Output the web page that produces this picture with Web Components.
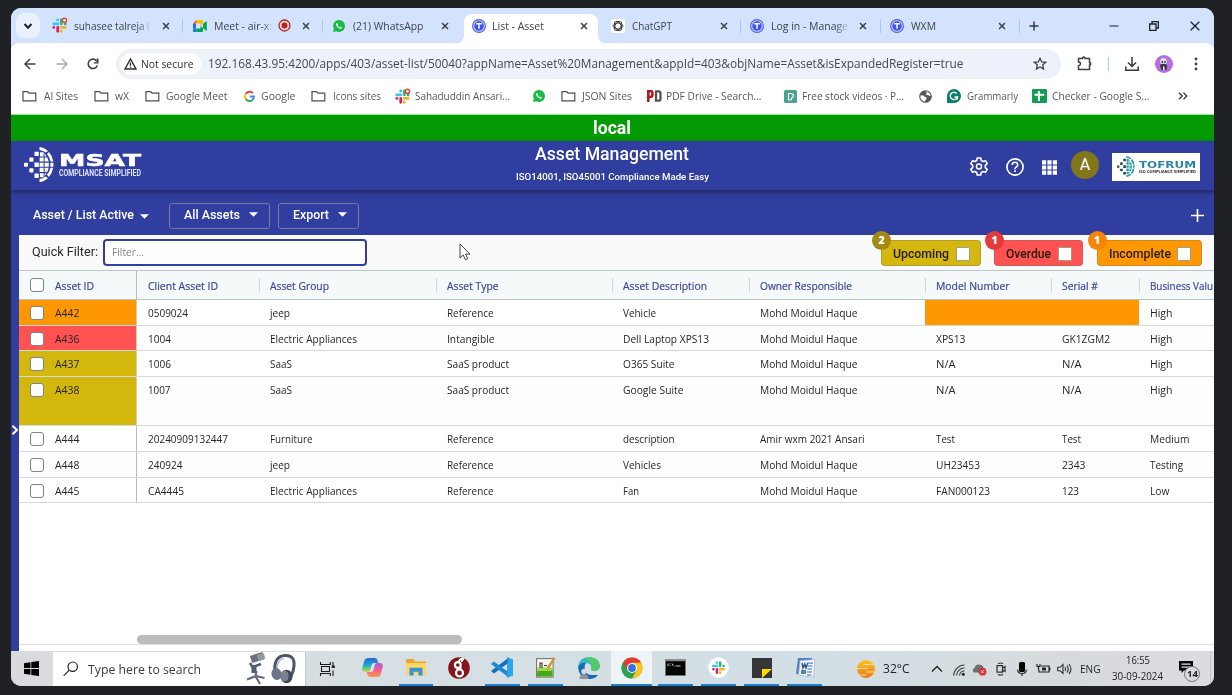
<!DOCTYPE html>
<html lang="en">
<head>
<meta charset="utf-8">
<title>List - Asset</title>
<style>
html,body{margin:0;height:100%;background:#202125;overflow:hidden}
body{display:flex;padding:8px 18px 9px 11px;box-sizing:border-box;font-family:"Open Sans","Noto Sans",sans-serif}
</style>
</head>
<body>
<desktop-window></desktop-window>
<script>
const svg=(w,h,vb,body)=>`<svg width="${w}" height="${h}" viewBox="${vb}" fill="none" style="display:block;overflow:visible">${body}</svg>`;
const slackMark='<g stroke-width="3" stroke-linecap="round"><path stroke="#36c5f0" d="M1.800 6.200h4.300M6.100 2v.1"/><path stroke="#2eb67d" d="M9.900 2v4.200M14 6.200v.1"/><path stroke="#e01e5a" d="M6.100 10v4.200M1.900 10h.1"/><path stroke="#ecb22e" d="M9.900 10h4.300M9.900 14v.1"/></g>';
const globeSquares=(c1,c2)=>`<g fill="${c1}"><rect y="15.700" width="4" height="4" rx="1"/><rect x="5.300" y="10.600" width="4.200" height="4.200" rx=".8"/><rect x="5.300" y="21.200" width="4.200" height="4.200" rx=".8"/><path d="M10.500 4.700h4.300v4.200h-4.300zM10.500 15.600h4.300v4.300h-4.300zM10.500 26.600h4.300v4.300h-4.300z"/></g><g fill="${c2}"><path d="M15.500 0q5 .5 8.500 4l-2.500 1.500q-2-2-6-2.600zM16 5.200h3.600v4.300H16zM20.600 6l1.800 3.500h-1.800zM25 5q3.500 4 4.300 9.500H26.800Q25.500 10 23 7zM15.600 10.600h4v4h-4zM20.600 10.600h2.600l1.700 4h-4.300zM15.600 15.700h4v4h-4zM20.600 15.700h4.200v4h-4.200zM26.300 15.700h3.200q0 2.200-.2 4h-3zM15.600 20.800h4v4.300h-4zM20.600 20.800h4.200l-1.600 4.300h-2.600zM26.600 20.800h2.600q-1 5.500-4.300 9.300l-2-2.500Q25.500 25 26.600 20.800zM16 26.200h3.600v4H16zM20.600 26.200h1.800l-1.800 3.300zM15.500 32q3.500-.6 6-2.600l2.500 1.500q-3.500 3.600-8.500 4.100z"/></g>`;
const ICONS={
 down:svg(10,8,'0 0 10 8','<path d="M1.500 2l3.500 3.700L8.500 2" stroke="#202124" stroke-width="2"/>'),
 slack:svg(15,15,'0 0 16 16',slackMark+'<circle cx="13.300" cy="2.500" r="2.300" fill="#fff" stroke="#e0433a" stroke-width="1.500"/>'),
 meet:svg(14,12,'0 0 14 12','<path fill="#1a73e8" d="M0 3.500h3v5H0z"/><path fill="#ea4335" d="M0 3.500L3.500 0v3.500z"/><path fill="#fbbc04" d="M3.500 0H9q1 0 1 1v3L7.500 6V3.500h-4z"/><path fill="#1a73e8" d="M0 8.500h3.500V12H1q-1 0-1-1z"/><path fill="#00a94b" d="M3.500 12H9q1 0 1-1V8L7.500 6v2.500h-4zM10 4l3-2.700q.8-.3.800.5v8.400q0 .8-.8.500L10 8z"/>'),
 rec:svg(13,13,'0 0 13 13','<circle cx="6.500" cy="6.500" r="5.500" stroke="#b3261e" stroke-width="1.300" fill="#e8d5de"/><circle cx="6.500" cy="6.500" r="3" fill="#b3261e"/>'),
 x:svg(8,8,'0 0 8 8','<path d="M1 1l6 6M7 1L1 7" stroke="#3c4043" stroke-width="1.500"/>'),
 wa:svg(12,12,'0 0 12 12','<path fill="#16bd42" d="M0 12l.8-3.200A6 6 0 1 1 3.200 11.200z"/><path d="M3.500 3.200q.7-.6 1.100.2l.5 1-.5.900q.7 1.300 2 1.900l.8-.6 1.300.6q.4 1.200-1 1.600Q5.500 9 3.500 6 2.700 4 3.500 3.200z" fill="#fff"/>'),
 tee:svg(14,14,'0 0 14 14','<circle cx="7" cy="7" r="6.400" fill="#c3ccff" stroke="#5060ef" stroke-width="1.100"/><circle cx="7" cy="7" r="4.700" fill="#4054ec"/><path d="M4.200 4.800h5.600M7 4.800v5" stroke="#fff" stroke-width="1.500"/>'),
 gpt:svg(14,14,'0 0 14 14','<rect width="14" height="14" rx="2.500" fill="#fff"/><g stroke="#3a3a3a" stroke-width=".9"><ellipse cx="7" cy="7" rx="5" ry="3"/><ellipse cx="7" cy="7" rx="5" ry="3" transform="rotate(60 7 7)"/><ellipse cx="7" cy="7" rx="5" ry="3" transform="rotate(120 7 7)"/></g>'),
 plus:svg(10,10,'0 0 10 10','<path d="M5 .5v9M.5 5h9" stroke="#33363a" stroke-width="1.500"/>'),
 min:svg(10,10,'0 0 10 10','<path d="M.5 5h9" stroke="#202124" stroke-width="1.200"/>'),
 restore:svg(10,10,'0 0 10 10','<path d="M.7 3h6.300v6.300H.7zM3 3V.7h6.300V7H7" stroke="#202124" stroke-width="1.300"/>'),
 close:svg(10,10,'0 0 10 10','<path d="M.7.7l8.600 8.600M9.300.7L.7 9.300" stroke="#202124" stroke-width="1.300"/>'),
 back:svg(12,12,'0 0 12 12','<path d="M11.500 6H1.500M6 1L1 6l5 5" stroke="#43474b" stroke-width="1.500"/>'),
 fwd:svg(12,12,'0 0 12 12','<path d="M.5 6h10M6 1l5 5-5 5" stroke="#a5a7aa" stroke-width="1.300"/>'),
 reload:svg(12,12,'0 0 12 12','<path d="M10.300 7.500A4.700 4.700 0 1 1 9.800 3.200" stroke="#3c4043" stroke-width="1.600"/><path d="M11.500.5v5H6.800V4.200h3V.5z" fill="#3c4043"/>'),
 warn:svg(13,12,'0 0 13 12','<path d="M6.500 1L12 11H1z" stroke="#2c2e31" stroke-width="1.400"/><path d="M6.500 4.500v3.200M6.500 8.500v1.300" stroke="#2c2e31" stroke-width="1.300"/>'),
 star:svg(14,13,'0 0 14 13','<path d="M7 1.200l1.700 3.700 4 .4-3 2.700.9 4L7 10l-3.600 2 .9-4-3-2.700 4-.4z" stroke="#3c4043" stroke-width="1.300"/>'),
 ext:svg(16,15,'0 0 16 15','<path d="M1.500 2.500h4V1.700q1.200-1.200 2.500 0v.8h4.500v4.200h.8q1 1.200 0 2.400h-.8v4.400h-11V9.700q2-.2 2-1.900t-2-1.800z" stroke="#3c4043" stroke-width="1.500"/>'),
 dl:svg(14,14,'0 0 14 14','<path d="M7 0v9M3 5.500l4 4 4-4M.8 9.500v3.700h12.400V9.500" stroke="#33363a" stroke-width="1.500"/>'),
 av:svg(18,18,'0 0 18 18','<circle cx="9" cy="9" r="9" fill="#b56de0"/><circle cx="8.500" cy="6.500" r="3.400" fill="#ddd9e2"/><path d="M5.500 9.500q3-1.500 6 0l1 3h-1V15H6v-2.500H5z" fill="#38363d"/><circle cx="7.300" cy="7" r=".9" fill="#333"/><circle cx="10" cy="7" r=".9" fill="#333"/><path d="M8 11.500h1.500V15H8z" fill="#eee"/>'),
 dots:svg(4,14,'0 0 4 14','<g fill="#3c4043"><circle cx="2" cy="2" r="1.400"/><circle cx="2" cy="7" r="1.400"/><circle cx="2" cy="12" r="1.400"/></g>'),
 folder:svg(15,12,'0 0 15 12','<path d="M1 10V1.700h4.700L7 3.200h6.800v7.600H1z" stroke="#4b4e52" stroke-width="1.200"/>'),
 google:svg(11,11,'0 0 11 11','<path d="M9 2.200A4.400 4.400 0 0 0 1.800 3" stroke="#ea4335" stroke-width="2"/><path d="M1.700 3.200a4.400 4.400 0 0 0 0 4.700" stroke="#fbbc05" stroke-width="2"/><path d="M1.800 8A4.400 4.400 0 0 0 8.500 8.900" stroke="#34a853" stroke-width="2"/><path d="M5.700 5.600h4.200Q9.900 8 8.300 9.100" stroke="#4285f4" stroke-width="2"/>'),
 pd:svg(15,12,'0 0 15 12','<path d="M1.300 12V1.300h2.900q1.200 0 1.200 1.200v3q0 1.200-1.200 1.200H2" stroke="#b0151b" stroke-width="2.500"/><path d="M9 1.300h2.500q2 0 2 2v5.400q0 2-2 2H9z" stroke="#555" stroke-width="2.300"/>'),
 pexels:svg(13,13,'0 0 13 13','<rect width="13" height="13" rx="1.500" fill="#4ba491"/><path d="M4.500 3.500H7q2.300.2 2.300 2.300T7.500 8v1.700h-3z" stroke="#fff" stroke-width="1.100"/>'),
 globe:svg(13,13,'0 0 13 13','<circle cx="6.500" cy="6.500" r="6.300" fill="#55585c"/><path d="M1.500 5.500q2.500-.8 4 1.200l2 .5-.3 2-1.700 2.500Q2.500 11 1.500 8zM6.500 1.300L8 3 6.500 4.500l2.500.7 2.700.8Q11.500 3 8.500 1.700z" fill="#fff"/>'),
 gram:svg(14,14,'0 0 14 14','<path d="M0 14V7a7 7 0 1 1 7 7z" fill="#0c7f6a"/><path d="M9.800 4.500A3.700 3.700 0 1 0 10.500 8H7.500M10.500 8l-.5 2.500" stroke="#fff" stroke-width="1.400"/>'),
 sheet:svg(15,14,'0 0 15 14','<rect width="15" height="14" rx="1" fill="#129c52"/><path d="M6.900 2v10M2.500 5.700h9.800" stroke="#fff" stroke-width="2"/>'),
 more:svg(10,8,'0 0 10 8','<path d="M1 .7L4.300 4 1 7.300M5.500.7L8.800 4 5.500 7.300" stroke="#3c4043" stroke-width="1.400"/>'),
 msat:svg(30,35,'0 0 30 35',globeSquares('#fff','#fff')),
 tof:svg(18,23,'0 0 30 35',globeSquares('#27455a','#2b9ba5')),
 gear:svg(18,19,'0 0 18 19','<path d="M7.200 1h3.600l.5 2.500 1.700 1 2.400-.8 1.800 3-1.900 1.700v2.200l1.900 1.700-1.800 3-2.400-.8-1.700 1-.5 2.500H7.200l-.5-2.500-1.700-1-2.400.8-1.800-3 1.900-1.700V8.400L.8 6.700l1.800-3 2.400.8 1.700-1z" stroke="#fff" stroke-width="1.600" stroke-linejoin="round"/><circle cx="9" cy="9.500" r="2.500" stroke="#fff" stroke-width="1.500"/>'),
 help:svg(18,18,'0 0 18 18','<circle cx="9" cy="9" r="8.100" stroke="#fff" stroke-width="1.700"/><path d="M6.200 7q.1-2.700 2.800-2.700T11.800 7Q11.800 8.200 10 9.200 9 9.900 9 11.200" stroke="#fff" stroke-width="1.600"/><path d="M8.100 12.300h1.800V14H8.100z" fill="#fff"/>'),
 apps:svg(15,15,'0 0 15 15','<path fill="#fff" d="M0 .3h4.200v4.200H0zM5.400.3h4.200v4.200H5.400zM10.800.3H15v4.200h-4.200zM0 5.500h4.200v4.100H0zM5.400 5.500h4.200v4.100H5.400zM10.800 5.500H15v4.100h-4.200zM0 10.600h4.200v4.200H0zM5.400 10.600h4.200v4.200H5.400zM10.800 10.600H15v4.200h-4.200z"/>'),
 caret:svg(9,5,'0 0 9 5','<path fill="#fff" d="M0 .3h9L4.500 4.800z"/>'),
 add:svg(13,13,'0 0 13 13','<path d="M6.500 0v13M0 6.500h13" stroke="#fff" stroke-width="1.700"/>'),
 win:svg(15,15,'0 0 15 15','<path fill="#000" d="M0 2.200l6.500-1v5.900H0zM7.300 1.100L15 0v7.100H7.300zM0 7.900h6.500v5.900l-6.500-1zM7.300 7.900H15V15l-7.700-1.100z"/>'),
 search:svg(16,16,'0 0 16 16','<circle cx="9.700" cy="5.700" r="4.700" stroke="#222" stroke-width="1.200"/><path d="M6.300 9.100L.7 14.700" stroke="#222" stroke-width="1.200"/>'),
 mic:svg(20,31,'0 0 20 31','<path d="M5 6.500L17.500 2.500" stroke="#6a7080" stroke-width="7.500"/><path d="M12 5L18.500 2.500" stroke="#a3a6ab" stroke-width="6"/><path d="M13 1.500l2 6M15.500 .800l2 5.800" stroke="#71757c" stroke-width=".8"/><path d="M4 10l2.500 4 8.500-3" stroke="#505a70" stroke-width="2.400"/><path d="M8 12v8" stroke="#505a70" stroke-width="5"/><path d="M10.500 18l-1 6M10 23L1 26.500M10 23l8.500 2M10 24l4 7" stroke="#636b7c" stroke-width="2.200"/>'),
 head:svg(25,30,'0 0 25 30','<path d="M4 20Q2 2 14 1.500 24 1 23 12q-.5 6-3 10" stroke="#4b566a" stroke-width="3"/><path d="M6 18Q5 6 13 4.500" stroke="#a2aab7" stroke-width="1.200"/><ellipse cx="5.500" cy="20" rx="5" ry="6" fill="#6d7688" transform="rotate(-15 5.500 20)"/><ellipse cx="15.500" cy="22.500" rx="6" ry="6.800" fill="#3e485a"/><ellipse cx="13.500" cy="22" rx="4.200" ry="5.500" fill="#78818f"/>'),
 task:svg(15,14,'0 0 15 14','<path d="M.5 0v2.500h9.800V0M.5 14v-2.500h9.800V14M1.500 4.500h8v5h-8zM13 0v6M13 8.500V14" stroke="#1c1c1c" stroke-width="1.100"/><path d="M11.800 3.500h3v2.500h-3z" fill="#1c1c1c"/>'),
 copilot:svg(21,19,'0 0 21 19','<defs><linearGradient id="a" x2="0" y2="1"><stop stop-color="#2466d8"/><stop offset=".55" stop-color="#19b3c9"/><stop offset="1" stop-color="#cfdc35"/></linearGradient><linearGradient id="b" x2="0" y2="1"><stop stop-color="#ae57e8"/><stop offset=".5" stop-color="#f45f91"/><stop offset="1" stop-color="#f89a45"/></linearGradient></defs><path d="M6 0h7q2 0 2.700 3l.6 2H12q-2 0-2.500 2L8 12.500q-.6 1.500-2 1.500H3.500Q-.5 14 .3 10l2-7.500Q3.200 0 6 0z" fill="url(#a)"/><path d="M15 19H8.500Q6 19 5.300 16l-.6-2H9q2 0 2.500-2L13 6.500Q13.600 5 15 5h2.500Q21.500 5 20.700 9l-2 7.500Q17.800 19 15 19z" fill="url(#b)"/>'),
 explorer:svg(20,17,'0 0 20 17','<path d="M0 1q0-1 1-1h6l2 2.500h10q1 0 1 1V15H0z" fill="#e9a824"/><path d="M0 4h20v11.500H0z" fill="#fbd567"/><path d="M3.500 16.500V9.800q0-1 1-1h11q1 0 1 1v6.700h-4v-3.700h-5v3.700z" fill="#3c92cf"/>'),
 red:svg(22,22,'0 0 22 22','<circle cx="11" cy="11" r="10.800" fill="#85151b"/><circle cx="9.800" cy="8" r="2.900" stroke="#fff" stroke-width="2.200"/><circle cx="11.500" cy="16" r="3.500" stroke="#fff" stroke-width="2.200"/><path d="M11 5.500q-.5-4 4-3.500-.5 2-2 2.500M8.500 12.500l5-2" stroke="#fff" stroke-width="1.900"/>'),
 code:svg(22,21,'0 0 22 21','<path d="M16 0l6 2.500v16L16 21z" fill="#2fa3ea"/><path d="M16.500 1.500v5L3 16.500 0 14z" fill="#1271b8"/><path d="M16.500 19.500v-5L3 4.500 0 7z" fill="#1e88d2"/>'),
 npp:svg(20,21,'0 0 20 21','<rect x=".6" y="1.600" width="16.500" height="18.500" fill="#f6f6ee" stroke="#6d706d"/><path d="M1.200 10.500h15.400v9H1.200z" fill="#9bd94a"/><path d="M1.200 14h15.400v5.500H1.200z" fill="#46a818"/><path d="M4 11V6h2v5M8 8.500h3M12 8.500h3" stroke="#333" stroke-width="1.100"/><path d="M11.500 11.500L18.500.8" stroke="#d8962e" stroke-width="2.400"/>'),
 edge:svg(22,22,'0 0 22 22','<path d="M0 10Q1 0 11.500 0 21.500 1 22 9q-.5 5-6 5-4 0-2.500-3 .5-4-4.500-5Q2 6 0 10z" fill="#35b9c6"/><path d="M11.500 0Q21.500 1 22 9q-.5 5-6 5-4 0-2.500-3Q15 5 8 3z" fill="#52c76b"/><path d="M0 10q3-5 8-4-2 2-1 7t7 5h6Q17 22 11 22 1 21 0 10z" fill="#1768b7"/><circle cx="6" cy="14.500" r="2.700" fill="#d7d9db"/><path d="M1.500 22q0-5 4.500-5t4.500 5z" fill="#8d9295"/>'),
 chrome:svg(22,22,'0 0 22 22','<circle cx="11" cy="11" r="10.500" fill="#2ba24c"/><path d="M11 11L1.900 5.750A10.500 10.500 0 0 1 20.100 5.750z" fill="#e33b2e"/><path d="M11 11V5.750h9.100A10.500 10.500 0 0 1 11 21.500l4.500-8z" fill="#fcc31e"/><path d="M1.900 5.750L6.500 13.600 11 11z" fill="#e33b2e"/><path d="M1.900 5.750l4.600 7.900h4.500v7.850A10.500 10.500 0 0 1 1.900 5.750z" fill="#2ba24c"/><circle cx="11" cy="11" r="5" fill="#fff"/><circle cx="11" cy="11" r="3.900" fill="#2f73e2"/>'),
 cmd:svg(21,17,'0 0 21 17','<rect width="21" height="17" fill="#8c8f92"/><rect x=".8" y="2.200" width="19.400" height="14" fill="#050505"/><path d="M3 4.500v2.500M5 4.500v.8M5 6.300v.8M7 4.500l1.500 2.700M10.500 7h5" stroke="#ddd" stroke-width=".9"/>'),
 slackc:svg(21,21,'0 0 21 21','<circle cx="10.500" cy="10.500" r="10.200" fill="#fff"/><g transform="translate(3.800 3.800) scale(.84)">'+slackMark+'</g>'),
 sticky:svg(20,20,'0 0 20 20','<path d="M0 0h20v20H0z" fill="#363636"/><path d="M10 20v-9h9z" fill="#e6bd00"/><path d="M10 20v-9h10z" fill="#ffd900"/>'),
 word:svg(20,20,'0 0 20 20','<path d="M3 0h14l-1 16H1z" fill="#4e7ec5"/><path d="M5 2.500l15-1-1.500 18L3.500 17z" fill="#f4f7fc" stroke="#9cb3d8" stroke-width=".7"/><path d="M7 5l1 5 1.800-4L11 10l2-5.200M6 13h5M6 15h5" stroke="#2b5797" stroke-width="1.500"/><path d="M13.500 5H18M13 8h4.500M12.500 11H17M12 14h5M12 17h4.500" stroke="#3566ad" stroke-width="1.100"/>'),
 sun:svg(20,18,'0 0 20 18','<defs><linearGradient id="s" x2="0" y2="1"><stop stop-color="#fbc51f"/><stop offset="1" stop-color="#ef7717"/></linearGradient></defs><circle cx="10" cy="9" r="9" fill="url(#s)"/><path d="M7 4.500h13M0 8.500h12M10 12h10M2 15h8" stroke="#f7dca8" stroke-width="1.100"/>'),
 up:svg(12,8,'0 0 12 8','<path d="M1 6.500l5-5 5 5" stroke="#222" stroke-width="1.300"/>'),
 wifi:svg(12,12,'0 0 12 12','<path d="M.7 11.500A11 11 0 0 1 11.500 1M3.500 11.500A8 8 0 0 1 11.500 4M6.500 11.500a5 5 0 0 1 5-4.500" stroke="#3d3f42" stroke-width="1.200"/><circle cx="10.300" cy="10.300" r="1.500" fill="#222"/>'),
 cloud:svg(15,12,'0 0 15 12','<path d="M2 8.500Q-1 6 2.500 4 4-.5 8 .8q3 0 3.500 3Q15 5 13 8.500z" fill="#6d7074"/><circle cx="10.500" cy="7.700" r="3.900" fill="#df2f33"/><path d="M9 6.200l3 3M12 6.200l-3 3" stroke="#fff" stroke-width="1"/>'),
 cam:svg(10,14,'0 0 10 14','<path d="M1 3.700h5.500v6.500H1zM6.500 6L9 4.500v5L6.500 8M2 1.500q2.500-1 5 0M2 12.500q2.500 1 5 0" stroke="#2c2e31" stroke-width="1.200"/>'),
 micr:svg(10,14,'0 0 10 14','<rect x="2" width="6" height="10" rx="1.500" fill="#000"/><path d="M.6 7.500q0 4 4.400 4t4.400-4M5 11.500V14" stroke="#222" stroke-width="1.100"/>'),
 batt:svg(15,11,'0 0 15 11','<path d="M5 3h8v6H3V7M13.800 4.500v3" stroke="#222" stroke-width="1.200"/><path d="M6 4.500h4v3H6z" fill="#222"/><path d="M1 1v2.500h3V1M2.500 3.500V7" stroke="#222" stroke-width="1.200"/>'),
 vol:svg(15,12,'0 0 15 12','<path d="M.7 4.300H3L6 1.500v9L3 7.700H.7zM8 4q1.300 2 0 4M10 2.500q2.500 3.500 0 7M12 1q4 5 0 10" stroke="#2c2e31" stroke-width="1.100"/>'),
 note:svg(14,12,'0 0 14 12','<path d="M0 0h14v9.500H5L2.500 12V9.500H0z" fill="#080808"/><path d="M2.500 3.200h9M2.500 6.200h9" stroke="#ddd" stroke-width="1.200"/>'),
 cursor:svg(12,18,'0 0 12 18','<path d="M1 1v14l3.200-3 2.200 4.800 2.400-1.100-2.200-4.600H11z" fill="#fff" stroke="#444" stroke-width="1"/>'),
 chev:svg(8,10,'0 0 8 10','<path d="M1.500.8L6 5 1.500 9.200" stroke="#fff" stroke-width="2"/>')
};
const define=(name,css,html,after)=>customElements.define(name,class extends HTMLElement{
  connectedCallback(){
    if(this.shadowRoot)return;
    const r=this.attachShadow({mode:'open'});
    r.innerHTML=`<style>*{box-sizing:border-box}${css}</style>${typeof html==='function'?html(this):html}`;
    if(after)after(this,r);
  }
});
/* Flow helpers: every entry is [start, width, markup]; the gap to the previous entry becomes its margin. */
const line=(start,items)=>{let p=start;return items.map(([x,w,h,st=''])=>{const m=x-p;p=x+w;return `<div style="flex:none;width:${w}px;margin-left:${m}px;${st}">${h}</div>`}).join('')};
const T=(w,t,st='')=>`<fit-text w="${w}" style="${st}">${t}</fit-text>`;
const tx=(x,w,t,st='')=>[x,w,T(w,t,st)];
const ic=(x,w,n,st='')=>[x,w,`<ui-icon name="${n}"></ui-icon>`,st];

/* Text set to a given advance width by horizontal condensing. */
define('fit-text',':host{display:block;white-space:pre}span{display:inline-block;transform-origin:0 50%}','<span><slot></slot></span>',(el,r)=>{
  const w=+el.getAttribute('w'),s=r.querySelector('span');el.style.width=w+'px';
  const n=s.getBoundingClientRect().width;if(n)s.style.transform=`scaleX(${w/n})`;
});
define('ui-icon',':host{display:block;line-height:0}',el=>ICONS[el.getAttribute('name')]||'');
define('check-box',':host{display:block;box-sizing:border-box;flex:none;width:14px;height:14px;border:1px solid var(--edge,#7d8487);border-radius:var(--round,3px);background:#fff}','');

const fade='-webkit-mask-image:linear-gradient(90deg,#000 84%,rgba(0,0,0,.15));';
const sep=(x,c='#a9c7fa')=>[x,1,'',`height:14px;background:${c}`];
define('tab-strip',`:host{display:flex;align-items:center;height:35px;background:#d3e3fd;font-size:11px;color:#3f4246;line-height:16px}
.drop{height:25px;border-radius:8px;background:#e9f1fe;display:grid;place-items:center}
.active{height:30px;background:#fff;border-radius:8px 8px 0 0;display:flex;align-items:center;position:relative;top:3px}
.active:before,.active:after{content:"";position:absolute;bottom:0;width:8px;height:8px}
.active:before{left:-8px;background:radial-gradient(circle at 0 0,transparent 7.5px,#fff 8px)}
.active:after{right:-8px;background:radial-gradient(circle at 100% 0,transparent 7.5px,#fff 8px)}
.active>*{padding-bottom:5px}`,
()=>line(11,[[16,24,'<div class="drop"><ui-icon name="down"></ui-icon></div>'],ic(52,15,'slack'),[73.5,76,T(76,'suhasee talreja ('),fade],ic(162,8,'x'),sep(182),ic(193,14,'meet'),[214,58,T(58,'Meet - air-x:'),fade],ic(278,13,'rec'),ic(302,8,'x'),sep(322),ic(333,12,'wa'),tx(352.5,70.5,'(21) WhatsApp'),ic(441,8,'x'),
[464,134,`<div class="active">${line(464,[ic(472,14,'tee'),tx(492,52,'List - Asset'),ic(580,8,'x')])}</div>`],
ic(610.5,14,'gpt'),tx(632,40,'ChatGPT'),ic(719.5,8,'x'),sep(740),ic(750,14,'tee'),[771,77,T(77,'Log in - Manage'),fade],ic(859,8,'x'),sep(880),ic(889.5,14,'tee'),tx(911,25,'WXM'),ic(998,8,'x'),sep(1019),ic(1029,10,'plus'),ic(1109,10,'min'),ic(1149,10,'restore'),ic(1190,10,'close')]));

define('address-bar',`:host{display:flex;align-items:center;height:41px;background:#fff;border-radius:8px 8px 0 0;color:#45484c;font-size:12px;line-height:18px}
.omni{height:30px;border-radius:15px;background:#edf1f9;display:flex;align-items:center}
.chip{height:22px;border-radius:11px;background:#fff;display:flex;align-items:center;color:#2c2e31;font-size:11px}`,
()=>line(11,[ic(24,12,'back'),ic(55.5,12,'fwd'),ic(87,12,'reload'),
[116,945,`<div class="omni">${line(116,[[120,81,`<div class="chip">${line(120,[ic(124,13,'warn'),tx(141,52.5,'Not secure','font-weight:500')])}</div>`],tx(208,755.5,'192.168.43.95:4200/apps/403/asset-list/50040?appName=Asset%20Management&amp;appId=403&amp;objName=Asset&amp;isExpandedRegister=true'),ic(1033,14,'star')])}</div>`],
ic(1077,16,'ext'),sep(1108),ic(1125,14,'dl'),ic(1155,18,'av'),ic(1193.5,4,'dots')]));

define('bookmark-bar',`:host{box-sizing:border-box;display:flex;align-items:center;height:31px;padding-bottom:6px;background:#fff;border-bottom:1px solid #9be79b;color:#55585c;font-size:10.5px;line-height:16px}`,
()=>line(11,[ic(22,15,'folder'),tx(43.5,34,'AI Sites'),ic(93.500,15,'folder'),tx(115,14,'wX'),ic(144.500,15,'folder'),tx(166,61.5,'Google Meet'),ic(243.500,11,'google'),tx(261,34.5,'Google'),ic(311,15,'folder'),tx(333,48,'Icons sites'),ic(395,15,'slack'),tx(415,95,'Sahaduddin Ansari...'),ic(532.500,12,'wa'),ic(561,15,'folder'),tx(582,50,'JSON Sites'),ic(646.500,15,'pd'),tx(666,95.5,'PDF Drive - Search...'),ic(783.500,13,'pexels'),tx(802,102,'Free stock videos · P...'),ic(919,13,'globe'),ic(947,14,'gram'),tx(966.500,51,'Grammarly'),ic(1032,15,'sheet'),tx(1052,97.5,'Checker - Google S...'),ic(1178,10,'more')]));

define('env-banner',`:host{display:flex;justify-content:center;align-items:center;height:26px;background:#049a03;color:#fff;font:700 18px/26px Roboto,sans-serif;padding-right:1px;box-sizing:border-box}`,T(38,'local'));

define('app-header',`:host{display:flex;align-items:center;height:49px;background:#303f9f;color:#fff;font-family:Roboto,sans-serif;box-shadow:0 2px 5px rgba(0,0,0,.45);position:relative;z-index:2}
.logo{padding-top:0}.m{font:700 15px/14px "DejaVu Sans",sans-serif;-webkit-text-stroke:.5px #fff}.c{font:700 8.500px/10px "Roboto",sans-serif;color:#dde2ff}
.mid{height:49px}.h{font-size:17.5px;font-weight:500;line-height:25px;padding-top:1px}.s{font-size:9.500px;font-weight:500;line-height:14px;margin:3px 0 0 -19.5px}
.a{height:28px;border-radius:50%;background:#817619;text-align:center;font-size:16px;line-height:28px;margin-top:-2px}
.t{height:28px;background:#fff;display:flex;align-items:center;padding-left:5px;gap:4px;color:#2b86a6}
.t b{display:block;font:700 9.500px/9px "DejaVu Sans",sans-serif;margin-top:2px}.t i{display:block;font:700 4px/6px "DejaVu Sans",sans-serif;color:#333}`,
()=>line(11,[ic(24,30,'msat','margin-top:-3px'),[59,82,`<div class="logo"><div class="m">${T(82,'MSAT')}</div><div class="c">${T(82,'COMPLIANCE SIMPLIFIED')}</div></div>`],
[535,154,`<div class="mid"><div class="h">${T(154,'Asset Management')}</div><div class="s">${T(193,'ISO14001, ISO45001 Compliance Made Easy')}</div></div>`],
ic(970,18,'gear','margin-top:2px'),ic(1005.500,18,'help','margin-top:2px'),ic(1042,15,'apps','margin-top:3px'),[1071,28,'<div class="a">A</div>'],
[1112,88,`<div class="t" style="margin-top:2px"><ui-icon name="tof"></ui-icon><div><b>${T(57,'TOFRUM')}</b><i>${T(57,'ISO COMPLIANCE SIMPLIFIED')}</i></div></div>`]]));

define('action-bar',`:host{box-sizing:border-box;display:flex;align-items:center;height:45px;padding-top:6px;background:#303f9f;color:#fff;font:500 13px/18px Roboto,sans-serif}
.b{height:26px;border:1px solid #73799f;border-radius:3px;display:flex;align-items:center;padding-bottom:2px}`,
()=>line(11,[tx(33,101,'Asset / List Active','padding-bottom:1px'),ic(140,9,'caret','padding-top:1px'),
[169,101,`<div class="b">${line(170,[tx(184,56,'All Assets'),ic(249,9,'caret')])}</div>`],
[278,81,`<div class="b">${line(279,[tx(293,36,'Export'),ic(338,9,'caret')])}</div>`],ic(1191,13,'add','padding-bottom:1px')]));

define('status-chip',`:host{box-sizing:border-box;display:block;position:relative;height:26px;margin-top:1px;border:1px solid rgba(120,110,90,.35);border-radius:4px;background:var(--fill);color:#241c08;font:500 13px/18px Roboto,sans-serif}
.r{display:flex;align-items:center;justify-content:space-between;height:100%;padding:1px 10px 0 11px}
.n{position:absolute;left:-10px;top:-10px;width:19px;height:19px;border-radius:50%;background:var(--badge);color:#fff;font:800 10.500px/19px "Open Sans",sans-serif;text-align:center}
check-box{--round:1px;--edge:#a59b8b}`,
el=>`<div class="r">${T(el.getAttribute('w'),el.textContent)}<check-box></check-box></div><div class="n">${el.getAttribute('count')}</div>`);

define('filter-row',`:host{display:flex;align-items:center;height:35px;background:#fafafa;color:#26282b;font:13px/18px Roboto,sans-serif;position:relative;z-index:3}
.f{height:27px;border:2px solid #303f9f;border-radius:4px;background:#fff;padding:2px 0 0 7px;font:10.500px/18px "Open Sans",sans-serif;color:#858585}
.p{position:absolute;left:440px;top:8px}`,
()=>line(19,[tx(32,66,'Quick Filter:','padding-bottom:1px'),[103,264,`<div class="f">${T(32,'Filter...')}</div>`],
[881,100,'<status-chip w="56" count="2" style="--fill:#d4b80f;--badge:#a38a14">Upcoming</status-chip>'],
[994,89,'<status-chip w="45" count="1" style="--fill:#ff5252;--badge:#e33a3a">Overdue</status-chip>'],
[1096.500,105.500,'<status-chip w="62" count="1" style="--fill:#ff9800;--badge:#f78309">Incomplete</status-chip>']])+'<div class="p"><ui-icon name="cursor"></ui-icon></div>');

const HEAD=[['Asset ID',39],['Client Asset ID',70],['Asset Group',59],['Asset Type',51.500],['Asset Description',84],['Owner Responsible',92],['Model Number',73.500],['Serial #',36],['Business Valu',63]];
const MM=['Mohd Moidul Haque',97.500];
const ROWS=[
 [25,'#ff9800',['A442',24.500],['0509024',40],['jeep',20],['Reference',46.500],['Vehicle',33],MM,null,null,['High',22.500]],
 [24,'#ff5252',['A436',24.500],['1004',23],['Electric Appliances',87],['Intangible',47.500],['Dell Laptop XPS13',86],MM,['XPS13',29.500],['GK1ZGM2',48],['High',22.500]],
 [25,'#d3b70d',['A437',24.500],['1006',23],['SaaS',22],['SaaS product',62],['O365 Suite',51.500],MM,['N/A',19.500],['N/A',19.500],['High',22.500]],
 [48,'#d3b70d',['A438',24.500],['1007',22.500],['SaaS',22],['SaaS product',62],['Google Suite',60.500],MM,['N/A',19.500],['N/A',19.500],['High',22.500]],
 [25,'',['A444',24.500],['20240909132447',80],['Furniture',42.500],['Reference',46.500],['description',51.500],['Amir wxm 2021 Ansari',104.500],['Test',19],['Test',19],['Medium',39.500]],
 [25,'',['A448',24.500],['240924',34.500],['jeep',20],['Reference',46.500],['Vehicles',38],MM,['UH23453',44],['2343',23.500],['Testing',33]],
 [24,'',['A445',24.500],['CA4445',36],['Electric Appliances',87],['Reference',46.500],['Fan',16],MM,['FAN000123',54],['123',17],['Low',19.500]]
];
define('asset-grid',`:host{flex:1;min-height:0;background:#fff;font-size:10.500px;line-height:16px;color:#262626;overflow:hidden;display:flex;flex-direction:column}
.row{display:grid;grid-template-columns:118px 122px 176.500px 176.500px 136.500px 176.500px 126px 88px 1fr;border-bottom:1px solid #d5dbdd;box-sizing:content-box}
.row:nth-of-type(odd){background:#fcfdfd}
.c{padding:5px 0 0 11px}
.first{display:flex;gap:11px;padding:6px 0 0 11px;border-right:1px solid #b5bdc1}
.first fit-text{margin-top:-1px}
.first.k{border-right-color:#d9cfae}
.row.head{height:28px;background:#f6f9f9;color:#3948a0;border-top:1px solid #bcc4c6;border-bottom-color:#bcc4c6;-webkit-text-stroke:.2px #3948a0}
.head .c{padding-top:7px}.head .first{padding-top:7px}.head .first fit-text{margin-top:0}
.head .c+.c{background:linear-gradient(#cfd6da,#cfd6da) 0 50%/1px 14px no-repeat}
.gap{flex:1}
.track{height:10px;border-bottom:1px solid #dfe2e3}
.thumb{margin-left:118px;width:325px;height:9px;border-radius:5px;background:#bcbcbc}
.foot{height:6px}`,
()=>{
 const first=(t,bg)=>`<div class="first ${bg?'k':''}" style="background:${bg||'transparent'}"><check-box></check-box>${T(t[1],t[0])}</div>`;
 return `<div class="row head">${first(HEAD[0])}${HEAD.slice(1).map(([t,w])=>`<div class="c">${T(w,t)}</div>`).join('')}</div>`+
 ROWS.map(([h,bg,id,...cs])=>`<div class="row" style="height:${h}px">${first(id,bg)}${cs.map(c=>c?`<div class="c">${T(c[1],c[0])}</div>`:'<div style="background:#ff9800"></div>').join('')}</div>`).join('')+
 '<div class="gap"></div><div class="track"><div class="thumb"></div></div><div class="foot"></div>';
});

define('side-handle',`:host{box-sizing:border-box;display:flex;align-items:flex-start;width:8px;background:#303f9f;padding-top:190px}`,'<ui-icon name="chev"></ui-icon>');

define('task-bar',`:host{display:flex;align-items:center;height:35px;background:linear-gradient(90deg,#d9dadd,#d6dfe3 30%,#d2dfe4 68%,#d7dadd 88%,#dbdcdf);color:#222;line-height:16px}
.sb{height:34px;background:#fff;border-right:1px solid #c4c7c9;display:flex;align-items:center;font-size:13px;color:#3c3c3c}
.app{height:35px;display:grid;place-items:center;border-bottom:2px solid transparent}
.on{border-color:#1a7fd0}.cur{background:#eef3f5}
.ck{font-size:11px}.ck div{display:flex;justify-content:center}
.nt{position:relative}.bd{position:absolute;left:5px;top:5px;width:16px;height:16px;border:1px solid #777;border-radius:50%;background:#d9dadd;font:700 9.500px/14px "Open Sans",sans-serif;display:grid;place-items:center}`,
()=>{const app=(x,w,n,c='on')=>[x,w,`<div class="app ${c}"><ui-icon name="${n}"></ui-icon></div>`];
return line(11,[ic(24,15,'win'),[53,253,`<div class="sb">${line(53,[ic(63,16,'search'),tx(88,113,'Type here to search'),ic(246,20,'mic'),ic(271,25,'head')])}</div>`],
ic(320,15,'task'),app(355,35,'copilot',''),app(398.500,34.500,'explorer'),app(441,36,'red',''),app(484.500,35,'code'),app(528,35,'npp'),app(571.500,35,'edge',''),app(611,41,'chrome','on cur'),app(657.500,35,'cmd'),app(701,35,'slackc'),app(744,35,'sticky'),app(787,35,'word'),
ic(855.500,20,'sun'),tx(883,26.500,'32°C','font-size:12.500px'),ic(931,12,'up'),ic(953,12,'wifi','padding-top:3px'),ic(972,15,'cloud','padding-top:2px'),ic(996,10,'cam'),ic(1016.500,10,'micr'),ic(1036,15,'batt'),ic(1056.500,15,'vol'),tx(1080,20.500,'ENG','font-size:11px'),
[1112,51,`<div class="ck"><div>${T(24,'16:55')}</div><div>${T(51,'30-09-2024')}</div></div>`,'margin-top:-1px'],
[1179,21,`<div class="nt"><ui-icon name="note"></ui-icon><div class="bd">${T(11,'14')}</div></div>`,'margin-top:-4px'],[1210,1,'','height:35px;background:#c2c5c8']])});

define('desktop-window',`:host{display:flex;flex-direction:column;width:1203px;height:678px;border-radius:10px;overflow:hidden;background:#d3e3fd}
main{flex:1;min-height:0;display:flex}section{flex:1;min-width:0;display:flex;flex-direction:column}`,
'<tab-strip></tab-strip><address-bar></address-bar><bookmark-bar></bookmark-bar><env-banner></env-banner><app-header></app-header><action-bar></action-bar><main><side-handle></side-handle><section><filter-row></filter-row><asset-grid></asset-grid></section></main><task-bar></task-bar>');
</script>
</body>
</html>
